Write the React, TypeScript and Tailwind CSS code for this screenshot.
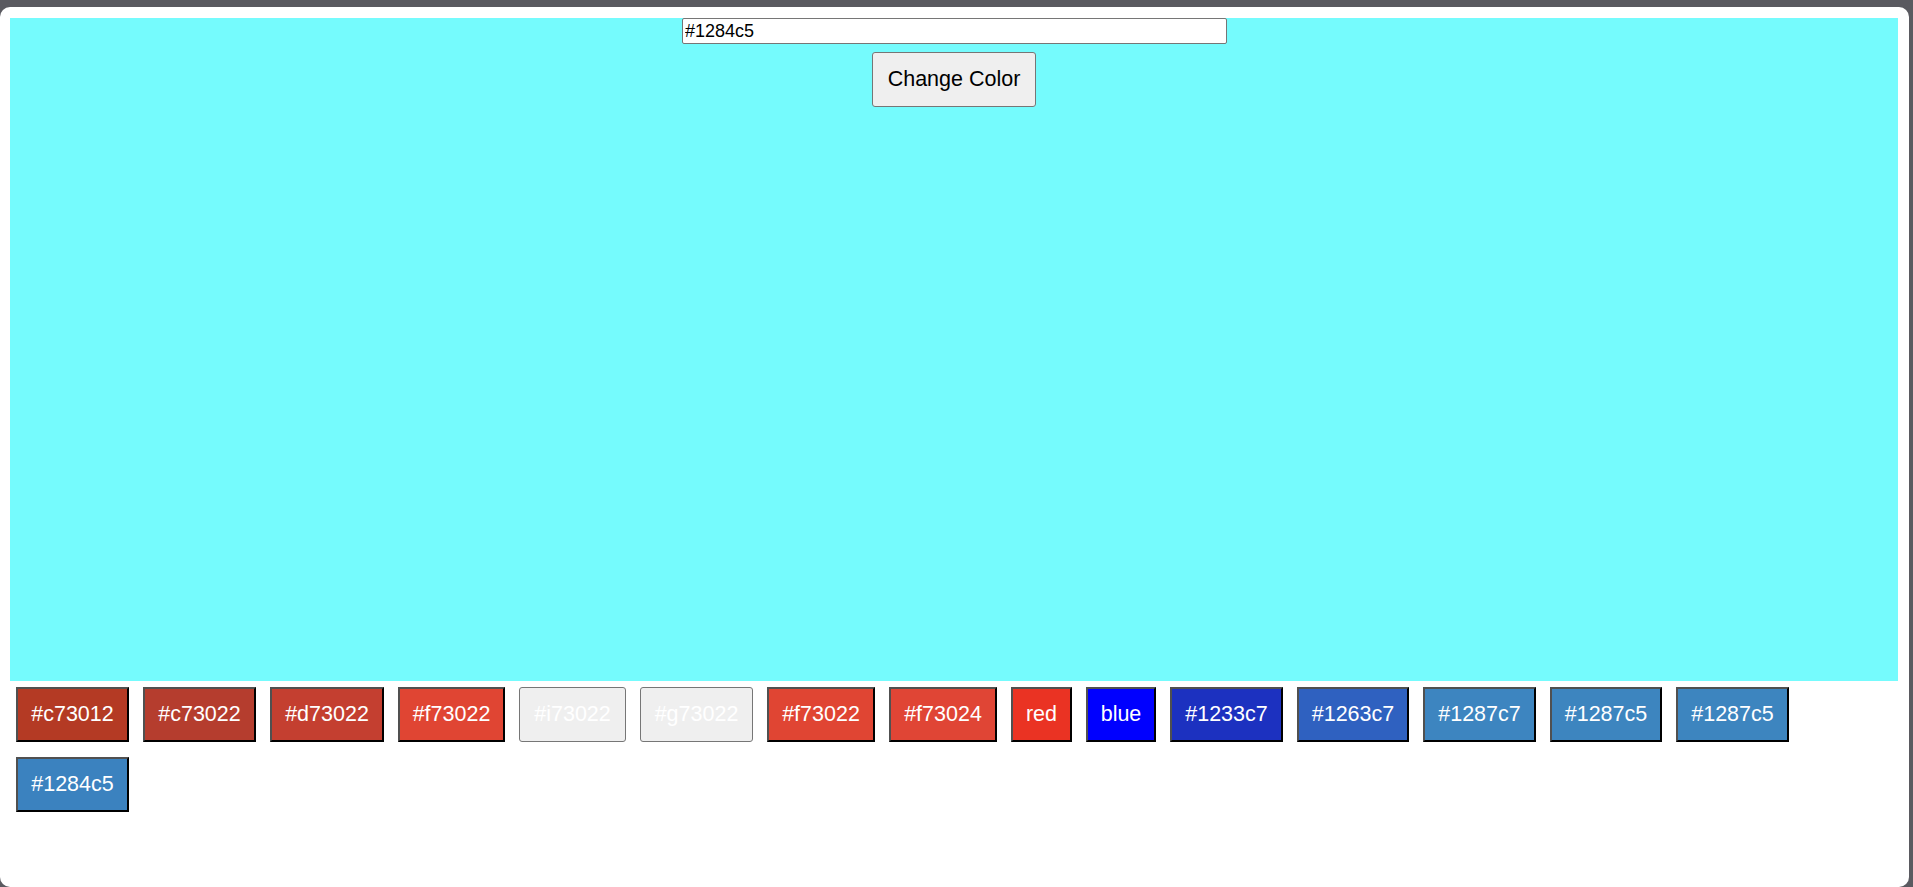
import React from "react";

type Swatch = { label: string; bg: string | null; w: string };

const swatches: Swatch[] = [
  { label: "#c73012", bg: "bg-[#b43a24]", w: "w-[113px]" },
  { label: "#c73022", bg: "bg-[#b53d2e]", w: "w-[113px]" },
  { label: "#d73022", bg: "bg-[#c43f30]", w: "w-[114px]" },
  { label: "#f73022", bg: "bg-[#e04533]", w: "w-[107px]" },
  { label: "#i73022", bg: null, w: "w-[107px]" },
  { label: "#g73022", bg: null, w: "w-[113px]" },
  { label: "#f73022", bg: "bg-[#e04533]", w: "w-[108px]" },
  { label: "#f73024", bg: "bg-[#e04535]", w: "w-[108px]" },
  { label: "red", bg: "bg-[#ea3323]", w: "w-[61px]" },
  { label: "blue", bg: "bg-[#0000ff]", w: "w-[70px]" },
  { label: "#1233c7", bg: "bg-[#1c31c0]", w: "w-[113px]" },
  { label: "#1263c7", bg: "bg-[#2f61c0]", w: "w-[112px]" },
  { label: "#1287c7", bg: "bg-[#3d85c0]", w: "w-[113px]" },
  { label: "#1287c5", bg: "bg-[#3d85bf]", w: "w-[112px]" },
  { label: "#1287c5", bg: "bg-[#3d85bf]", w: "w-[113px]" },
  { label: "#1284c5", bg: "bg-[#3b82bf]", w: "w-[113px]" },
];

export default function App() {
  return (
    <div
      className="w-[1913px] h-[887px] bg-[#5a5a60] pt-[7px] pr-[4px] overflow-hidden"
      style={{ fontFamily: '"Liberation Sans", Arial, sans-serif' }}
    >
      <div className="w-[1909px] h-[880px] bg-white rounded-[10px] pt-[11px] pl-[10px] pr-[11px] overflow-hidden">
        <div className="h-[663px] w-full bg-[#75fbfd] flex flex-col items-center gap-[8px]">
          <input
            type="text"
            defaultValue="#1284c5"
            className="w-[545px] h-[26px] bg-white border border-[#767676] rounded-[2px] px-[2px] text-[18px] leading-[22px] text-black outline-none ml-[1px]"
          />
          <button className="w-[164px] h-[55px] bg-[#efefef] border border-[#767676] rounded-[3px] text-[21.5px] text-black flex items-center justify-center">
            Change Color
          </button>
        </div>
        <div className="flex flex-wrap gap-x-[14px] gap-y-[15px] mt-[6px] pl-[6px]">
          {swatches.map((s, i) =>
            s.bg ? (
              <button
                key={i}
                className={`${s.w} ${s.bg} h-[55px] border-2 border-t-[#505050] border-l-[#505050] border-r-black border-b-black text-white text-[21.5px] flex items-center justify-center`}
              >
                {s.label}
              </button>
            ) : (
              <button
                key={i}
                className={`${s.w} h-[55px] bg-[#efefef] border border-[#767676] rounded-[3px] text-white text-[21.5px] flex items-center justify-center`}
              >
                {s.label}
              </button>
            )
          )}
        </div>
      </div>
    </div>
  );
}
